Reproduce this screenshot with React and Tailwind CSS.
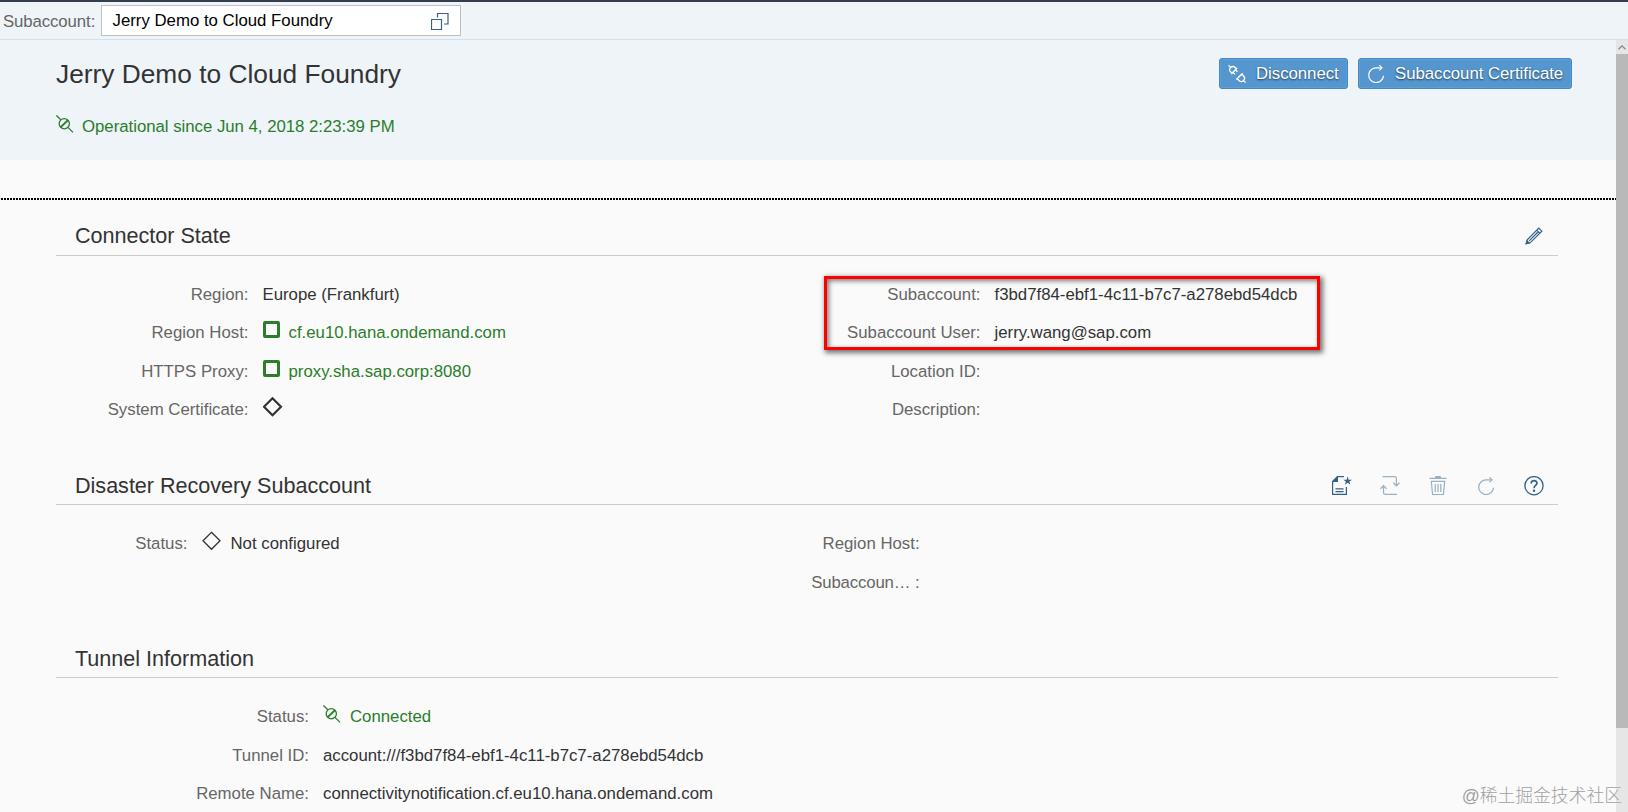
import React from "react";

const GREEN = "#2b7d2b";
const BLUE = "#346187";

function PlugIcon({ className = "" }) {
  return (
    <svg viewBox="0 0 18 18" className={`h-[18px] w-[18px] shrink-0 ${className}`} fill="none" stroke="currentColor" strokeWidth="1.3">
      <path d="M0.4 0.4 4.8 4.8M12 12.4l5 5" />
      <circle cx="8.3" cy="8.7" r="5.1" />
      <path d="M4.4 12.4 12.2 5" strokeWidth="1.9" />
    </svg>
  );
}

function DisconnectIcon() {
  return (
    <svg viewBox="0 0 18 18" className="h-[18px] w-[18px] shrink-0" fill="none" stroke="currentColor" strokeWidth="1.3">
      <g transform="translate(5.2 5) rotate(45)">
        <path d="M-6.6 0H-3.4M1.4 -4.2V4.2M1.4 -3.2H-0.4A3.2 3.2 0 0 0 -0.4 3.2H1.4M1.4 -1.8H4.2M1.4 1.8H4.2" />
      </g>
      <g transform="translate(13 13) rotate(45)">
        <path d="M3.4 0H6.4M-2.2 -4.4V4.4M-2.2 -3.2H0.4A3.2 3.2 0 0 1 0.4 3.2H-2.2" />
      </g>
    </svg>
  );
}

function RefreshIcon({ className = "" }) {
  return (
    <svg viewBox="0 0 18 18" className={`h-[18px] w-[18px] shrink-0 ${className}`} fill="none" stroke="currentColor" strokeWidth="1.2">
      <path d="M15 2.8H9.4A7.4 7.4 0 1 0 16.5 10.8" />
      <path d="M12.4 0.3 15 2.8 12.4 5.4" />
    </svg>
  );
}

function ValueHelpIcon() {
  return (
    <svg viewBox="0 0 18 18" className="mt-[2px] h-[18px] w-[18px]" fill="none" stroke={BLUE} strokeWidth="1.2">
      <path d="M0.5 6.5h10v10H0.5ZM6.5 4.5v-4h10.5v10.5h-4" />
    </svg>
  );
}

function PencilIcon() {
  return (
    <svg viewBox="0 0 18 18" className="h-[18px] w-[18px]" fill="none" stroke={BLUE} strokeWidth="1.2">
      <path d="M1.2 16.8 2.2 12.8 13.8 1.2 16.8 4.2 5.2 15.8ZM11.8 3.2 14.8 6.2M4.2 13.8 13 5" />
      <path d="M0.4 17.6 1.8 12.8 5.2 16.2Z" fill={BLUE} stroke="none" />
    </svg>
  );
}

function AddFavoriteIcon() {
  return (
    <svg viewBox="0 0 20 20" className="h-5 w-5" fill="none" stroke={BLUE} strokeWidth="1.2">
      <path d="M12 0.6H5.5L0.6 5.5V18.4H14.4V11M3.5 12.8h8M3.5 15.6h8" />
      <path d="M0.6 6V5L5 0.6H6V6Z" fill={BLUE} stroke="none" />
      <path d="M15.6 0.6 16.6 3.7H20L17.3 5.6 18.4 8.8 15.6 6.8 12.9 8.8 13.9 5.6 11.3 3.7H14.6Z" fill={BLUE} stroke="none" />
    </svg>
  );
}

function SynchronizeIcon() {
  return (
    <svg viewBox="0 0 20 20" className="h-5 w-5" fill="none" stroke="#9ab0c3" strokeWidth="1.2">
      <path d="M2.5 0.7H14.5Q16.4 0.7 16.4 2.6V9.6M13.3 6.8 16.4 9.8 19.5 6.8" />
      <path d="M17 18.4H5.5Q3.5 18.4 3.5 16.4V10M0.4 12.7 3.5 9.7 6.6 12.7" />
    </svg>
  );
}

function TrashIcon() {
  return (
    <svg viewBox="0 0 18 20" className="h-5 w-[18px]" fill="none" stroke="#9ab0c3" strokeWidth="1.2">
      <path d="M0.5 2.3H17.5M2 5.3H16M2.3 5.3 3.6 18.5H14.4L15.7 5.3" />
      <path d="M6.2 8V16M9 8V16M11.8 8V16" />
      <path d="M6.2 0H11.8V2.3H6.2Z" fill="#9ab0c3" stroke="none" />
    </svg>
  );
}

function HelpIcon() {
  return (
    <svg viewBox="0 0 20 20" className="h-5 w-5" fill="none" stroke={BLUE}>
      <circle cx="10" cy="9.7" r="9.1" strokeWidth="1.3" />
      <path d="M7.2 7.4C7.2 3.6 13 3.8 12.9 7.2 12.8 9.4 10 9.4 10 12.2" strokeWidth="1.7" />
      <circle cx="10" cy="14.8" r="1.2" fill={BLUE} stroke="none" />
    </svg>
  );
}

function SquareIcon() {
  return <span className="-mt-[6px] mr-[9px] h-[17px] w-[17px] rounded-[2px] border-3 border-[#2b7d2b]" />;
}

function DiamondIcon({ strokeWidth }) {
  return (
    <svg viewBox="0 0 20 20" className="-mt-[6px] mr-[9px] h-5 w-5" fill="none" stroke="#333333" strokeWidth={strokeWidth}>
      <path d="M9.5 1.3 18 9.8 9.5 18.3 1 9.8Z" />
    </svg>
  );
}

function Row({ label, labelClass, children }) {
  return (
    <div className="flex h-[38.4px] items-center whitespace-nowrap">
      <span className={`${labelClass} text-right text-[#666666]`}>{label}:</span>
      <span className="ml-[14px] flex items-center">{children}</span>
    </div>
  );
}

function Section({ title, className, headClass = "pt-[5px]", bodyClass = "pt-[19.6px]", tools = [], children }) {
  return (
    <section className={className}>
      <div className={`flex h-[42px] items-center justify-between border-b border-[#cccccc] pr-[14px] pl-[19px] ${headClass}`}>
        <h2 className="text-[21.6px] tracking-[-0.02px]">{title}</h2>
        <div className="flex items-center gap-[28px]">
          {tools.map((Icon, i) => (
            <span key={i} className="flex w-5 justify-center text-[#9ab0c3]">
              <Icon />
            </span>
          ))}
        </div>
      </div>
      <div className={`flex ${bodyClass}`}>{children}</div>
    </section>
  );
}

function HeaderButton({ icon, className, children }) {
  return (
    <button
      className={`flex h-[31px] items-center rounded-[3px] border border-[#4189c7] bg-[#5496cd] pl-[8px] text-white inset-shadow-[0_0_0_1px_#5f9fd4] [text-shadow:0_1px_2px_rgba(0,0,0,0.6)] ${className}`}
    >
      {icon}
      <span className="ml-[10px] tracking-[-0.03px] whitespace-nowrap">{children}</span>
    </button>
  );
}

export default function App() {
  return (
    <div className="relative flex h-[812px] w-[1628px] flex-col overflow-hidden bg-[#fafafa] font-['Liberation_Sans',Arial,sans-serif] text-[16.8px] text-[#333333]">
      {/* Subaccount selector */}
      <div className="flex h-10 shrink-0 items-center border-t-2 border-b border-t-[#333d4d] border-b-[#cfe0ee] bg-[#eff4f9] pl-[3px]">
        <span className="w-[98px] pt-[2px] tracking-[-0.1px] text-[#666666]">Subaccount:</span>
        <div className="flex h-[31px] w-[360px] items-center justify-between border border-[#bfbfbf] bg-white pr-[11px] pl-[10.5px] text-black">
          <span>Jerry Demo to Cloud Foundry</span>
          <ValueHelpIcon />
        </div>
      </div>

      <div className="flex min-h-0 flex-1">
        <main className="w-[1616px] overflow-hidden">
          <header className="flex h-[120px] justify-between bg-[#eff4f9] pt-[18px] pr-[44px] pl-[56px]">
            <div>
              <h1 className="text-[26.3px] leading-[32px]">Jerry Demo to Cloud Foundry</h1>
              <div className="mt-[24px] flex items-center" style={{ color: GREEN }}>
                <PlugIcon className="-mt-[5px]" />
                <span className="ml-[8px] tracking-[-0.02px]">Operational since Jun 4, 2018 2:23:39 PM</span>
              </div>
            </div>
            <div className="flex gap-[10px]">
              <HeaderButton icon={<DisconnectIcon />} className="w-[129px]">Disconnect</HeaderButton>
              <HeaderButton icon={<RefreshIcon />} className="w-[214px]">Subaccount Certificate</HeaderButton>
            </div>
          </header>

          <div className="mt-[38px] ml-px h-[2px] bg-[repeating-linear-gradient(90deg,#000_0_2px,#fafafa_2px_3px)]" />

          <div className="pr-[58px] pl-[56px]">
            <Section
              title="Connector State"
              className="mt-[14px]"
              headClass="pt-[3px]"
              bodyClass="pt-[19.4px]"
              tools={[PencilIcon]}
            >
              <div className="w-[732px]">
                <Row label="Region" labelClass="w-[192.5px]">Europe (Frankfurt)</Row>
                <Row label="Region Host" labelClass="w-[192.5px]">
                  <SquareIcon />
                  <span className="text-[#2b7d2b]">cf.eu10.hana.ondemand.com</span>
                </Row>
                <Row label="HTTPS Proxy" labelClass="w-[192.5px]">
                  <SquareIcon />
                  <span className="text-[#2b7d2b]">proxy.sha.sap.corp:8080</span>
                </Row>
                <Row label="System Certificate" labelClass="w-[192.5px]"><DiamondIcon strokeWidth={2.2} /></Row>
              </div>
              <div className="relative">
                <Row label="Subaccount" labelClass="w-[192.5px]">f3bd7f84-ebf1-4c11-b7c7-a278ebd54dcb</Row>
                <Row label="Subaccount User" labelClass="w-[192.5px]">jerry.wang@sap.com</Row>
                <Row label="Location ID" labelClass="w-[192.5px]" />
                <Row label="Description" labelClass="w-[192.5px]" />
                {/* Marker around the subaccount data */}
                <div className="absolute top-[0.6px] left-[36px] h-[74px] w-[496px] border-3 border-[#ff0000] shadow-[2px_2px_5px_1px_rgba(0,0,0,0.55)] inset-shadow-[2px_2px_5px_rgba(0,0,0,0.5)]" />
              </div>
            </Section>

            <Section
              title="Disaster Recovery Subaccount"
              className="mt-[34px]"
              tools={[AddFavoriteIcon, SynchronizeIcon, TrashIcon, RefreshIcon, HelpIcon]}
            >
              <div className="w-[732px]">
                <Row label="Status" labelClass="w-[131.5px]">
                  <DiamondIcon strokeWidth={1.3} />
                  Not configured
                </Row>
              </div>
              <div>
                <Row label="Region Host" labelClass="w-[131.6px]" />
                <Row label={<span className="tracking-[-0.15px]">Subaccoun… </span>} labelClass="w-[131.6px]" />
              </div>
            </Section>

            <Section title="Tunnel Information" className="mt-[34.6px]">
              <div>
                <Row label="Status" labelClass="w-[253px]">
                  <PlugIcon className="-mt-[5px] mr-[9px] text-[#2b7d2b]" />
                  <span className="text-[#2b7d2b]">Connected</span>
                </Row>
                <Row label="Tunnel ID" labelClass="w-[253px]">account:///f3bd7f84-ebf1-4c11-b7c7-a278ebd54dcb</Row>
                <Row label="Remote Name" labelClass="w-[253px]">connectivitynotification.cf.eu10.hana.ondemand.com</Row>
              </div>
            </Section>
          </div>
        </main>

        {/* Scrollbar */}
        <div className="flex w-3 flex-col bg-[#e6e6e6]">
          <div className="flex h-[14px] items-center justify-center">
            <svg viewBox="0 0 8 5" className="h-[5px] w-2" fill="none" stroke="#888888" strokeWidth="1.3">
              <path d="M0.5 4.3 4 0.9 7.5 4.3" />
            </svg>
          </div>
          <div className="h-[674px] bg-[#b9b9b9]" />
        </div>
      </div>

      <div className="absolute right-[6px] bottom-[2px] font-['Liberation_Sans','Noto_Sans_CJK_SC',sans-serif] text-[17.8px] font-light text-[#a0a0a0] [text-shadow:0_0_1px_#fff]">
        @稀土掘金技术社区
      </div>
    </div>
  );
}
